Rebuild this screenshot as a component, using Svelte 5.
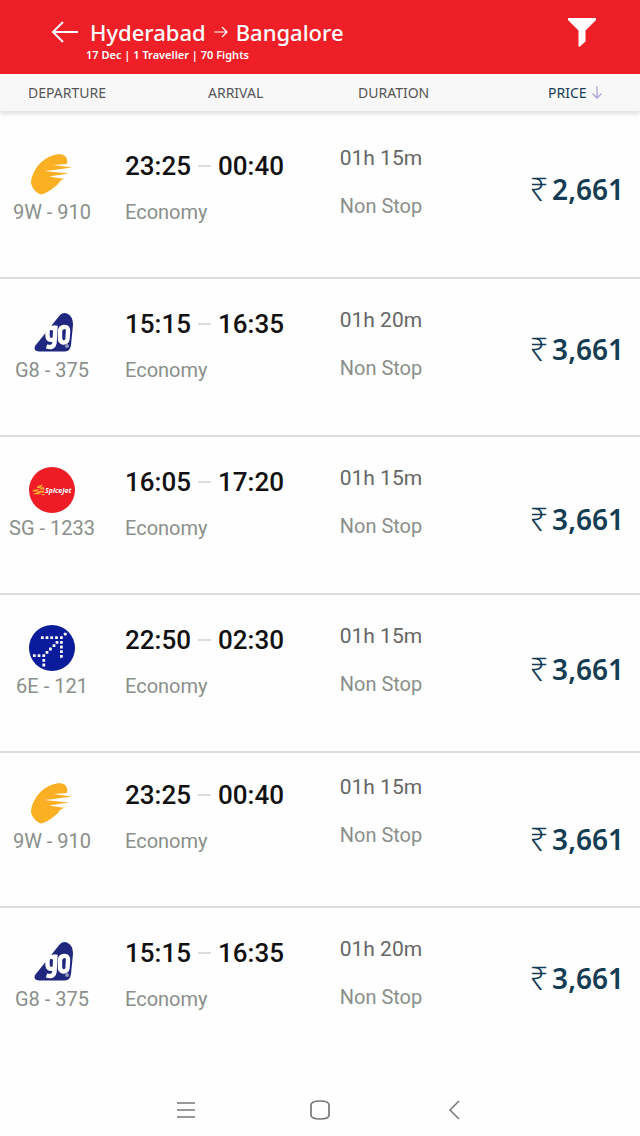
<script>
  const flights = [
    { airline: 'jet', number: '9W - 910', from: '23:25', to: '00:40', duration: '01h 15m', price: '2,661', tone: 'early' },
    { airline: 'go', number: 'G8 - 375', from: '15:15', to: '16:35', duration: '01h 20m', price: '3,661', tone: '' },
    { airline: 'spice', number: 'SG - 1233', from: '16:05', to: '17:20', duration: '01h 15m', price: '3,661', tone: 'low' },
    { airline: 'indigo', number: '6E - 121', from: '22:50', to: '02:30', duration: '01h 15m', price: '3,661', tone: 'mid' },
    { airline: 'jet', number: '9W - 910', from: '23:25', to: '00:40', duration: '01h 15m', price: '3,661', tone: 'early compact' },
    { airline: 'go', number: 'G8 - 375', from: '15:15', to: '16:35', duration: '01h 20m', price: '3,661', tone: '' }
  ];

  // Dot centres of the aircraft mark, on a 48-unit grid
  const dots = [
    [14.3, 13.7], [19, 13.7], [23.7, 13.7], [28.5, 13.7], [33.4, 13.7], [37.2, 10.2],
    [33.4, 18.3], [33.4, 23], [33.4, 27.6], [33.4, 32.4],
    [29, 18.3], [26, 21.7], [22.4, 25], [19, 28.4], [15.8, 31.7],
    [6.3, 31.7], [11, 31.7], [15.8, 36.4], [15.8, 41]
  ];
</script>

<div class="screen">
  <header>
    <button class="back" aria-label="Back">
      <svg width="28" height="22" viewBox="0 0 28 22" fill="none" stroke="#fff" stroke-width="2">
        <path d="M27 11H2M12 1L2 11l10 10" />
      </svg>
    </button>
    <div class="route">
      <h1>
        <span>Hyderabad</span>
        <svg width="14" height="12" viewBox="0 0 14 12" fill="none" stroke="#fff" stroke-width="1.2">
          <path d="M0 6h13M8 1l5 5-5 5" />
        </svg>
        <span>Bangalore</span>
      </h1>
      <p>17 Dec | 1 Traveller | 70 Fights</p>
    </div>
    <button aria-label="Filter">
      <svg width="28" height="29" viewBox="0 0 28 29" fill="#fff">
        <path d="M0 0h28v2L17.500 12.500v11L12 28.500h-1.500v-16L0 2z" />
      </svg>
    </button>
  </header>

  <div class="sort">
    <button>DEPARTURE</button>
    <button>ARRIVAL</button>
    <button>DURATION</button>
    <button class="active">
      PRICE
      <svg width="10" height="13" viewBox="0 0 10 13" fill="none" stroke="#aaa4d8" stroke-width="1.3">
        <path d="M5 0v12M.5 7.500L5 12l4.500-4.500" />
      </svg>
    </button>
  </div>

  <ul>
    {#each flights as f}
      <li class={f.tone}>
        <div class="carrier">
          {#if f.airline === 'jet'}
            <svg width="48" height="48" viewBox="4 2 48 48">
              <path
                fill="#fbaf22"
                d="M17 46.500C12 45 8 40 7 35C7 27 13 17 20 12C26 7 37 4 41 8C43.500 10 43.500 14 43 16L29 17L48 19.500L30 22L20 23L45 25.500L25 28.500L41 31C36 31.500 36 34 33 37C28 41 22 46 17 46.500z"
              />
            </svg>
          {:else if f.airline === 'go'}
            <svg width="48" height="48" viewBox="0 1 48 48">
              <path fill="#20277f" d="M32 8Q35 5 39 6.500Q45 9 45 18L43 38Q42 44.500 37 44.500H11Q5 44 7 39z" />
              <g fill="none" stroke="#fff" stroke-width="4.4">
                <path d="M26 21.500Q19 18.500 19.500 27Q19 34.500 25.500 32.500M27.500 18.500L26.500 36Q25.500 41.500 18.500 39.500" />
                <path d="M35.500 20Q40.500 19 40 25L39.500 32Q39 36 35 35.500Q31.500 35 32 30L32 24Q32.500 20.500 35.500 20z" />
              </g>
              <circle cx="39" cy="39" r="2" fill="#9297bd" />
            </svg>
          {:else if f.airline === 'spice'}
            <svg width="48" height="48" viewBox="0 0 48 48">
              <circle cx="24" cy="24" r="23" fill="#ee1c25" />
              <g fill="#fbaa35">
                <path d="M10 20l5-1.500-2.500 3.500H8.500zM5 24l6-1-2 2.500H4.500zM12 22.500l3.500-2 1 3h-5.500zM10 25l6-.5.500 2-8 .500zM4.500 28l4-1.500 4 .5-2 1.500zM12 28h5l-1 1.500z" />
              </g>
              <text x="17" y="27" class="spice-word">SpiceJet</text>
            </svg>
          {:else}
            <svg width="48" height="48" viewBox="0 0 48 48">
              <circle cx="24" cy="24" r="23" fill="#0a1c9b" />
              {#each dots as [x, y]}
                <rect x={x - 1.4} y={y - 1.4} width="2.8" height="2.8" rx="0.5" fill="#fff" />
              {/each}
            </svg>
          {/if}
          <span>{f.number}</span>
        </div>
        <div class="times">
          <p class="clock"><span>{f.from}</span><i></i><span>{f.to}</span></p>
          <p class="sub">Economy</p>
        </div>
        <div class="length">
          <p class="total">{f.duration}</p>
          <p class="sub">Non Stop</p>
        </div>
        <div class="price"><span>₹</span>{f.price}</div>
      </li>
    {/each}
  </ul>

  <nav>
    <button aria-label="Menu">
      <svg width="20" height="20" viewBox="0 0 20 20" fill="none" stroke="#777" stroke-width="1.500">
        <path d="M1 3h18M1 10h18M1 17h18" />
      </svg>
    </button>
    <button aria-label="Home">
      <svg width="20" height="20" viewBox="0 0 20 20" fill="none" stroke="#777" stroke-width="1.700">
        <path d="M10 1Q19 1 19 5v10Q19 19 10 19T1 15V5Q1 1 10 1z" />
      </svg>
    </button>
    <button aria-label="Previous">
      <svg width="20" height="20" viewBox="0 0 20 20" fill="none" stroke="#777" stroke-width="1.500">
        <path d="M15 1L6 10l9 9" />
      </svg>
    </button>
  </nav>
</div>

<style>
  :global(body) {
    background: #fefefe;
  }
  .screen {
    min-height: 100vh;
    display: flex;
    flex-direction: column;
    font-family: Roboto, sans-serif;
    font-size: 20px;
    line-height: 24px;
    color: #666;
  }
  h1,
  p,
  ul {
    margin: 0;
    padding: 0;
  }
  button {
    border: 0;
    padding: 0;
    background: none;
    font: inherit;
    color: inherit;
    cursor: pointer;
  }
  svg {
    display: block;
    flex: none;
  }
  header {
    display: flex;
    align-items: flex-start;
    padding: 18px 44px 10px 51px;
    background: #ee1f26;
    color: #fff;
    font-family: 'Noto Sans', sans-serif;
  }
  .back {
    padding-top: 3px;
  }
  .route {
    flex: 1;
    padding-left: 7px;
  }
  h1 {
    display: flex;
    align-items: center;
    gap: 8px;
    padding-left: 4px;
    font-size: 22px;
    line-height: 28px;
    font-weight: 500;
  }
  .route p {
    font-size: 11px;
    line-height: 18px;
    font-weight: 600;
  }
  .sort {
    display: grid;
    grid-template-columns: 180fr 150fr 190fr 92fr;
    padding-left: 28px;
    background: #f8f8f8;
    box-shadow: 0 3px 4px rgba(0, 0, 0, 0.12);
    font-family: 'Noto Sans', sans-serif;
    font-size: 14px;
    font-weight: 400;
    line-height: 37px;
    color: #555;
  }
  .sort button {
    display: flex;
    align-items: center;
    gap: 5px;
  }
  .sort .active {
    color: #143c55;
  }
  ul {
    flex: 1;
    list-style: none;
    padding-top: 10px;
  }
  li {
    display: grid;
    grid-template-columns: 104px 39fr 30fr 23fr;
    column-gap: 21px;
    align-items: start;
    min-height: 158px;
    padding-right: 16px;
    border-bottom: 2px solid #dcdcdc;
    box-sizing: border-box;
  }
  li:last-child {
    border-bottom: 0;
  }
  .carrier {
    display: flex;
    flex-direction: column;
    align-items: center;
    padding-top: 29px;
    gap: 2px;
    color: #8a8f8b;
  }
  .times {
    padding-top: 33px;
  }
  .clock {
    display: flex;
    align-items: center;
    gap: 7px;
    padding-bottom: 22px;
    font-size: 26px;
    font-weight: 500;
    color: #111;
  }
  .clock i {
    width: 13px;
    height: 2px;
    background: #ddd;
  }
  .sub {
    color: #8a8f8b;
  }
  .length {
    display: grid;
    gap: 24px;
    padding-top: 29px;
  }
  .total {
    font-size: 21px;
  }
  .early .length {
    padding-top: 25px;
  }
  .price {
    display: flex;
    justify-content: flex-end;
    gap: 4px;
    padding-top: 54px;
    font-family: 'Noto Sans', sans-serif;
    font-size: 28px;
    line-height: 32px;
    font-weight: 600;
    color: #143c55;
  }
  .price span {
    font-size: 32px;
    font-weight: 300;
  }
  .early .price {
    padding-top: 52px;
  }
  .mid .price {
    padding-top: 58px;
  }
  .low .price {
    padding-top: 66px;
  }
  .compact {
    min-height: 155px;
  }
  .compact .carrier {
    padding-top: 26px;
  }
  .compact .times {
    padding-top: 30px;
  }
  .compact .length {
    padding-top: 22px;
  }
  .compact .price {
    padding-top: 70px;
  }
  .spice-word {
    font: italic 700 7px 'Open Sans', sans-serif;
    fill: #fff;
  }
  nav {
    display: flex;
    justify-content: center;
    gap: 114px;
    padding: 16px 0;
  }
</style>
